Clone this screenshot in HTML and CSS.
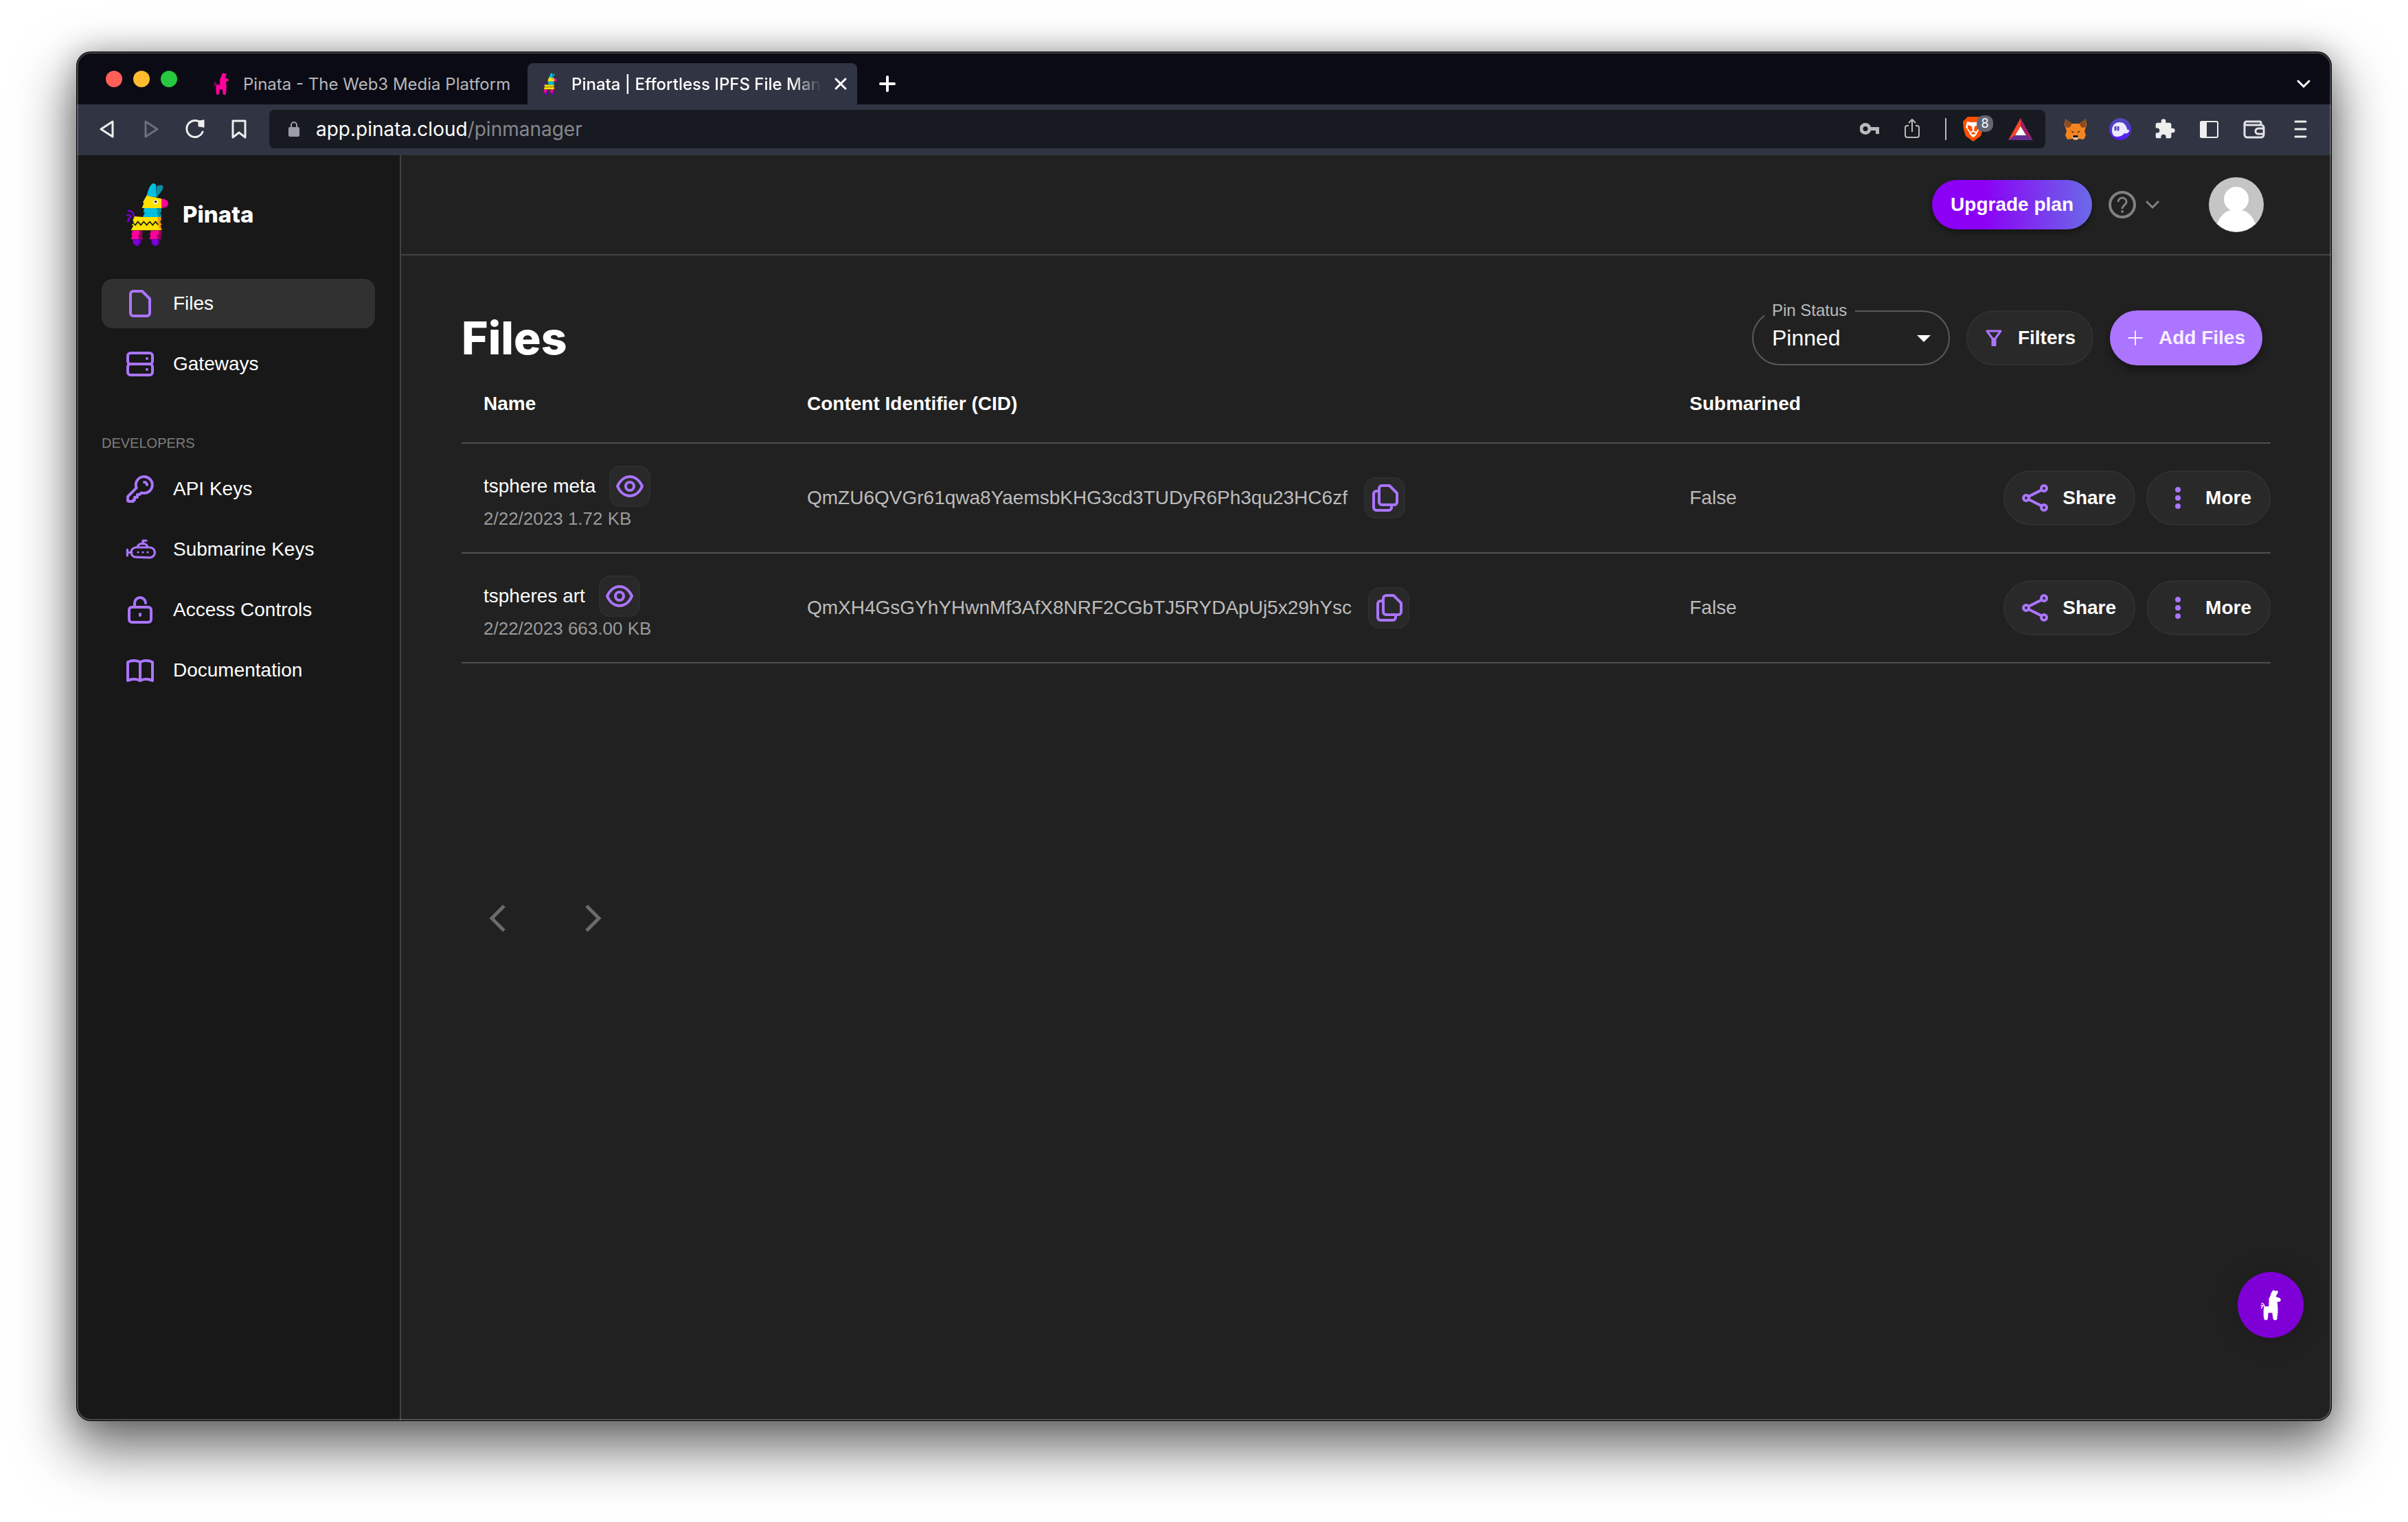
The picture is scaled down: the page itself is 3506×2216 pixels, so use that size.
FILE: index.html
```html
<!DOCTYPE html>
<html lang="en">
<head>
<meta charset="utf-8">
<title>Pinata | Effortless IPFS File Management</title>
<link rel="stylesheet" href="styles.css">
</head>
<body>
<svg class="sprite" aria-hidden="true">
  <symbol id="llama" viewBox="40 45 189 276">
    <path d="M175 62c6-6 20-9 27-3 4 6-1 16-6 24l-20 26h-4z" fill="#078ea3"/>
    <path d="M131 103c6-22 12-40 21-50 8-9 20-5 21 6v50z" fill="#00bfe0"/>
    <path d="M50 218c0-16 6-22 14-26M44 189c6-6 16-3 20 4M49 168c14-3 28 8 27 28" fill="none" stroke="#7d00d8" stroke-width="7"/>
    <path d="M131 101l65 14v38h8l-10 3h-83l9-23h-6z" fill="#ffe100"/>
    <path d="M196 115c16 0 30 10 30 22 0 9-10 17-30 17z" fill="#ff009c"/>
    <path d="M180 150l17 7c10 0 20-3 26-9-7 10-18 12-28 8z" fill="#8d0057"/>
    <circle cx="171" cy="129" r="9" fill="#fff"/><circle cx="171" cy="128" r="5" fill="#111"/>
    <path d="M121 156h60l9 18h-7l12 21h-80l9-20h-7z" fill="#00bfe0"/>
    <path d="M174 156h22v19l-6-2 8 21h-14l-8-20h6z" fill="#078ea3"/>
    <path d="M79 192l36 3h68l6 18-5 1 9 18-6 1 7 20H63l11-21-7-1 9-19-6-1z" fill="#ffe100"/>
    <path d="M178 195h17v18l-6-2 9 21-7-1 8 21h-9l-9-20 5-1-10-18 6-1z" fill="#ff9c00"/>
    <path d="M70 219l12 11 11-15 13 15 13-15 13 15 13-15 13 15 12-15 12 14" fill="none" stroke="#1b1b1b" stroke-width="5"/>
    <path d="M70 254h36l4 19h-4l8 19H62l7-18h-5zM151 254h36l5 19h-5l8 19h-52l7-18h-5z" fill="#ff009c"/>
    <path d="M99 254h14v19l-4-1 7 20H97l-3-20h7zM184 254h14v19l-4-1 2 20h-17l-3-20h8z" fill="#93005c"/>
    <path d="M72 292h36v10c0 10-8 18-18 18s-18-8-18-18zM153 292h36v10c0 10-8 18-18 18s-18-8-18-18z" fill="#7d00d8"/>
    <path d="M99 292h9v10c0 8-5 15-13 17 4-5 5-16 4-27zM180 292h9v10c0 8-5 15-13 17 4-5 5-16 4-27z" fill="#4f0089"/>
  </symbol>
  <symbol id="llama-solid" viewBox="40 45 189 276">
    <path d="M131 101c6-22 12-39 21-49 7-8 19-5 21 4 8-4 25-6 29 3 3 7-8 26-20 45l14 9c16 0 32 10 32 23s-14 20-30 18l-4 6 6 18-4 3 5 17-4 3 6 16-5 4 5 17-5 4 4 16-6 4 4 16-6 4 1 25c0 9-9 16-19 16s-20-7-20-18l-7-50h-36l-4 50c0 11-9 18-18 18s-17-7-17-17l-6-30 4-5-5-14 5-5-5-16 5-5-3-14 5-3-3-12 9-8 35 3 5-18-5-4 6-16-5-4 5-16-6-5z" fill="currentColor"/>
    <path d="M50 218c0-16 6-22 18-26M44 189c6-6 16-3 24 4M49 168c14-3 28 8 27 28" fill="none" stroke="currentColor" stroke-width="8"/>
  </symbol>
  <symbol id="eye" viewBox="0 0 24 24"><path d="M3 12c4-9.300 14-9.300 18 0c-4 9.300-14 9.300-18 0Z"/><circle cx="12" cy="12" r="3"/></symbol>
  <symbol id="copy" viewBox="0 0 24 24"><path d="M8 7H6a2 2 0 0 0-2 2v10a2 2 0 0 0 2 2h9a2 2 0 0 0 2-2v-2M8 5a2 2 0 0 1 2-2h5.500L21 8.500V15a2 2 0 0 1-2 2h-9a2 2 0 0 1-2-2z"/></symbol>
  <symbol id="share" viewBox="0 0 24 24"><circle cx="18.500" cy="5" r="2"/><circle cx="5.500" cy="12" r="2"/><circle cx="18.500" cy="19" r="2"/><path d="M16.800 6.200L7.200 11M7.200 13l9.600 4.800"/></symbol>
  <symbol id="dots" viewBox="0 0 24 24"><g fill="currentColor" stroke="none"><circle cx="12" cy="6" r="2"/><circle cx="12" cy="12" r="2"/><circle cx="12" cy="18" r="2"/></g></symbol>
</svg>

<div class="window">
  <div class="tabstrip">
    <div class="lights"><span class="light light-close"></span><span class="light light-min"></span><span class="light light-max"></span></div>
    <div class="tab">
      <svg class="favicon pink"><use href="#llama-solid"/></svg>
      <span class="tab-title">Pinata - The Web3 Media Platform</span>
    </div>
    <div class="tab tab-active">
      <svg class="favicon"><use href="#llama"/></svg>
      <span class="tab-title">Pinata | Effortless IPFS File Management</span>
      <button class="plain" aria-label="Close tab"><svg width="20" height="20" viewBox="0 0 20 20" stroke="#fff" stroke-width="3" stroke-linecap="round"><path d="M3 3l14 14M17 3L3 17"/></svg></button>
    </div>
    <button class="plain new-tab" aria-label="New tab"><svg width="28" height="28" viewBox="0 0 28 28" stroke="#fff" stroke-width="4" stroke-linecap="round"><path d="M14 4v20M4 14h20"/></svg></button>
    <button class="plain tab-list" aria-label="Search tabs"><svg width="24" height="24" viewBox="0 0 24 24" fill="none" stroke="#fff" stroke-width="3" stroke-linecap="round"><path d="M4 8l8 8 8-8"/></svg></button>
  </div>

  <div class="toolbar">
    <div class="nav-buttons">
      <button class="plain" aria-label="Back"><svg width="32" height="32" viewBox="0 0 32 32" fill="none" stroke="#eee" stroke-width="3" stroke-linejoin="round"><path d="M24 5v22L7 16z"/></svg></button>
      <button class="plain" aria-label="Forward"><svg width="32" height="32" viewBox="0 0 32 32" fill="none" stroke="#6d707c" stroke-width="3" stroke-linejoin="round"><path d="M8 5v22l17-11z"/></svg></button>
      <button class="plain" aria-label="Reload"><svg width="32" height="32" viewBox="0 0 32 32" fill="none" stroke="#eee" stroke-width="3" stroke-linecap="round"><path d="M26 9A12 12 0 1 0 27 20"/><path d="M22 5l6-1v8l-6-1z" fill="#eee"/></svg></button>
      <button class="plain" aria-label="Bookmark"><svg width="32" height="32" viewBox="0 0 32 32" fill="none" stroke="#eee" stroke-width="3" stroke-linejoin="round"><path d="M7 4h18v24l-9-7-9 7z"/></svg></button>
    </div>
    <div class="address">
      <svg width="16" height="24" viewBox="0 0 16 24" fill="#9a9ca8"><rect y="9" width="16" height="14" rx="2"/><path d="M4 10V6a4 4 0 0 1 8 0v4" fill="none" stroke="#9a9ca8" stroke-width="2"/></svg>
      <span class="url"><span class="host">app.pinata.cloud</span>/pinmanager</span>
      <div class="address-icons">
        <svg width="28" height="32" viewBox="0 0 28 32" fill="#b9babd"><path fill-rule="evenodd" d="M8 7a8 8 0 1 1 0 17A8 8 0 0 1 8 7zm0 5a3 3 0 1 0 0 7 3 3 0 0 0 0-7z"/><path d="M14 13h14v10h-5v-5h-9z"/></svg>
        <svg width="24" height="32" viewBox="0 0 24 32" fill="none" stroke="#b9babd" stroke-width="2"><path d="M7 11H5a3 3 0 0 0-3 3v11a3 3 0 0 0 3 3h14a3 3 0 0 0 3-3V14a3 3 0 0 0-3-3h-2M12 20V2M7 7l5-5 5 5"/></svg>
        <span class="divider"></span>
        <span class="brave">
          <svg width="30" height="36" viewBox="0 0 30 36"><path d="M7 0h16l7 6-1 12-3 10-11 8-11-8L1 18 0 7z" fill="#ff5000"/><path d="M6 7l6 1h6l6-1 2 8-4 6-3 6-4 3-4-3-3-6-4-6z" fill="#fff"/><path d="M7 12l6 2 1 6-3 2-4-5zM23 12l-6 2-1 6 3 2 4-5zM11 24l4-2 4 2-4 2z" fill="#ff5000"/></svg>
          <span class="badge">8</span>
        </span>
        <svg width="36" height="32" viewBox="0 0 36 32"><path d="M18 0v13l-9 13-9 6z" fill="#ff4724"/><path d="M18 0v13l9 13 9 6z" fill="#9e1f63"/><path d="M0 32l9-7h18l9 7z" fill="#662d91"/><path d="M18 12l8 13H10z" fill="#fff"/></svg>
      </div>
    </div>
    <div class="extensions">
      <svg width="32" height="32" viewBox="0 0 32 32"><path d="M1 1l10 7h10L31 1l1 9-3 9 2 6-3 6-8-1-2 2h-4l-2-2-8 1-3-6 2-6-3-9z" fill="#f5841f"/><path d="M1 1l10 7-4 6-6-1zM31 1L21 8l4 6 6-1z" fill="#8e4a1f"/><path d="M9 18l5 2-2 2zM23 18l-5 2 2 2z" fill="#5a3a28"/><path d="M11 27l5-1 5 1-2 4h-6z" fill="#d5bfb2"/><path d="M13 25h6l1 3h-8z" fill="#161616"/></svg>
      <svg width="32" height="32" viewBox="0 0 32 32"><defs><linearGradient id="ghost" x2="0" y2="1"><stop stop-color="#534bb1"/><stop offset="1" stop-color="#551bf9"/></linearGradient></defs><circle cx="16" cy="16" r="16" fill="url(#ghost)"/><path d="M4 18C4 10 9 6 15 6c7 0 10 5 11 10 1 2 3 0 3 2 0 3-3 5-7 4-3 4-7 5-11 5-4 0-7-3-7-9z" fill="#eceafd"/><path d="M9 13v4M13 13v4" stroke="#5a3fd0" stroke-width="3" stroke-linecap="round"/></svg>
      <svg width="32" height="32" viewBox="0 0 24 24" fill="#eee"><path d="M20.500 11H19V7a2 2 0 0 0-2-2h-4V3.500a2.500 2.500 0 0 0-5 0V5H4a2 2 0 0 0-2 2v3.800h1.500a2.700 2.700 0 0 1 0 5.400H2V20a2 2 0 0 0 2 2h3.800v-1.500a2.700 2.700 0 0 1 5.400 0V22H17a2 2 0 0 0 2-2v-4h1.500a2.500 2.500 0 0 0 0-5z"/></svg>
      <svg width="32" height="32" viewBox="0 0 32 32"><rect x="3" y="5" width="25" height="23" rx="2" fill="none" stroke="#eee" stroke-width="2"/><path d="M2 5h10v23H2z" fill="#eee"/></svg>
      <svg width="32" height="32" viewBox="0 0 32 32" fill="none" stroke="#e2e3e6" stroke-width="3"><path d="M26 10V7a2 2 0 0 0-2-2H5a3 3 0 0 0-3 3v16a4 4 0 0 0 4 4h20a4 4 0 0 0 4-4V14a4 4 0 0 0-4-4H5a3 3 0 0 1-3-3M30 15h-8a4 4 0 0 0 0 8h8"/></svg>
      <svg width="32" height="32" viewBox="0 0 32 32" stroke="#eee" stroke-width="3" stroke-linecap="round"><path d="M11 5h15M11 16h15M11 27h15"/></svg>
    </div>
  </div>

  <div class="app">
    <aside class="sidebar">
      <a class="brand" href="#"><svg class="brand-logo"><use href="#llama"/></svg><span>Pinata</span></a>
      <nav class="menu">
        <a class="menu-item menu-current" href="#"><svg class="icon" viewBox="0 0 24 24"><path d="M5 5a2 2 0 0 1 2-2h6.500L19 8.500V19a2 2 0 0 1-2 2H7a2 2 0 0 1-2-2z"/></svg>Files</a>
        <a class="menu-item" href="#"><svg class="icon" viewBox="0 0 24 24"><rect x="3" y="4" width="18" height="8" rx="2"/><rect x="3" y="12" width="18" height="8" rx="2"/><path d="M17 8h.01M17 16h.01"/></svg>Gateways</a>
      </nav>
      <h2 class="menu-heading">DEVELOPERS</h2>
      <nav class="menu">
        <a class="menu-item" href="#"><svg class="icon" viewBox="0 0 24 24"><path d="M9.300 11.200A6 6 0 1 1 13 14.700L11.500 16H10v2H8v2H7v1H4a1 1 0 0 1-1-1v-2.500z"/><path d="M15 7a2 2 0 0 1 2 2"/></svg>API Keys</a>
        <a class="menu-item" href="#"><svg class="icon icon-thin" viewBox="0 0 24 24"><path d="M9 10.500h10a3.700 3.700 0 0 1 0 7.400L9 17.600a3.500 3.500 0 0 1 0-7.100zM10 10.500a3.500 2.600 0 0 1 7.500 0M14 8V5.600h2.500M2.700 12v4.500M3 14.200h3"/><path d="M10.500 14h.01M14 14h.01M17.500 14h.01"/></svg>Submarine Keys</a>
        <a class="menu-item" href="#"><svg class="icon" viewBox="0 0 24 24"><rect x="4" y="10" width="16" height="11" rx="2"/><path d="M8 10V7a4 4 0 0 1 8 0M12 15v1"/></svg>Access Controls</a>
        <a class="menu-item" href="#"><svg class="icon" viewBox="0 0 24 24"><path d="M12 6c-2.500-1.400-6-1.400-9 0v13.500c3-1.400 6.500-1.400 9 0 2.500-1.400 6-1.400 9 0V6c-3-1.400-6.500-1.400-9 0zM12 6v13"/></svg>Documentation</a>
      </nav>
    </aside>

    <div class="content">
      <header class="header">
        <button class="upgrade">Upgrade plan</button>
        <button class="plain help" aria-label="Help">
          <svg width="40" height="40" viewBox="0 0 40 40" fill="none" stroke="#808080" stroke-width="4"><circle cx="20" cy="20" r="18"/><path d="M14 16c0-8 12-8 12 0 0 4-6 5-6 10M20 28v4" stroke-width="3"/></svg>
          <svg width="20" height="16" viewBox="0 0 20 16" fill="none" stroke="#808080" stroke-width="3"><path d="M1 3l9 9 9-9"/></svg>
        </button>
        <svg class="avatar" viewBox="0 0 80 80"><circle cx="40" cy="40" r="40" fill="#c5c5c5"/><circle cx="40" cy="32" r="18" fill="#fff"/><path d="M12 68c4-11 12-20 22-20h12c10 0 18 9 22 20a40 40 0 0 1-56 0z" fill="#fff"/></svg>
      </header>

      <main class="main">
        <div class="title-row">
          <h1>Files</h1>
          <div class="controls">
            <div class="field">
              <label for="pin-status">Pin Status</label>
              <select id="pin-status"><option>Pinned</option><option>Unpinned</option><option>All</option></select>
              <svg class="caret" width="20" height="10" viewBox="0 0 20 10" fill="#fff"><path d="M0 0h20L10 10z"/></svg>
            </div>
            <button class="pill"><svg class="icon icon-small" viewBox="0 0 24 24"><path d="M2 2h20l-8 11v10h-4V13z"/><path d="M12 13v9"/></svg>Filters</button>
            <button class="pill pill-primary"><svg class="icon icon-small" viewBox="0 0 24 24"><path d="M12 2v20M2 12h20"/></svg>Add Files</button>
          </div>
        </div>

        <div class="table-area">
          <table class="files">
            <thead>
              <tr><th class="col-name">Name</th><th class="col-cid">Content Identifier (CID)</th><th>Submarined</th><th></th></tr>
            </thead>
            <tbody>
              <tr>
                <td><div class="name-line"><span class="name">tsphere meta</span><button class="square" aria-label="View"><svg class="icon"><use href="#eye"/></svg></button></div><div class="meta">2/22/2023 1.72 KB</div></td>
                <td><div class="cid-line">QmZU6QVGr61qwa8YaemsbKHG3cd3TUDyR6Ph3qu23HC6zf<button class="square" aria-label="Copy"><svg class="icon"><use href="#copy"/></svg></button></div></td>
                <td>False</td>
                <td class="actions-cell"><div class="actions"><button class="pill"><svg class="icon"><use href="#share"/></svg>Share</button><button class="pill"><svg class="icon"><use href="#dots"/></svg>More</button></div></td>
              </tr>
              <tr>
                <td><div class="name-line"><span class="name">tspheres art</span><button class="square" aria-label="View"><svg class="icon"><use href="#eye"/></svg></button></div><div class="meta">2/22/2023 663.00 KB</div></td>
                <td><div class="cid-line">QmXH4GsGYhYHwnMf3AfX8NRF2CGbTJ5RYDApUj5x29hYsc<button class="square" aria-label="Copy"><svg class="icon"><use href="#copy"/></svg></button></div></td>
                <td>False</td>
                <td class="actions-cell"><div class="actions"><button class="pill"><svg class="icon"><use href="#share"/></svg>Share</button><button class="pill"><svg class="icon"><use href="#dots"/></svg>More</button></div></td>
              </tr>
            </tbody>
          </table>
        </div>

        <div class="pager">
          <button class="plain" aria-label="Previous page"><svg width="48" height="48" viewBox="0 0 48 48" fill="none" stroke="#6b6b6b" stroke-width="5"><path d="M34 6L16 24l18 18"/></svg></button>
          <button class="plain" aria-label="Next page"><svg width="48" height="48" viewBox="0 0 48 48" fill="none" stroke="#6b6b6b" stroke-width="5"><path d="M14 6l18 18-18 18"/></svg></button>
        </div>
      </main>
      <button class="chat" aria-label="Open chat"><svg width="30" height="46"><use href="#llama-solid"/></svg></button>
    </div>
  </div>
</div>
</body>
</html>
```
FILE: styles.css
```css
* { box-sizing: border-box; }

body {
  margin: 0;
  min-height: 100vh;
  padding: 76px 112px 148px;
  display: flex;
  background: #fff;
  font-family: "Liberation Sans", Arial, sans-serif;
  font-size: 28px;
  color: #fff;
}

svg { display: block; flex: none; }
.sprite { position: absolute; width: 0; height: 0; }
button { font: inherit; color: #fff; cursor: pointer; }
.plain { display: flex; align-items: center; justify-content: center; padding: 0; border: 0; background: none; }

.icon {
  width: 48px;
  height: 48px;
  color: #ab75ff;
  fill: none;
  stroke: currentColor;
  stroke-width: 2;
  stroke-linecap: round;
  stroke-linejoin: round;
}
.icon-thin { stroke-width: 1.6; }
.icon-small { width: 24px; height: 24px; stroke-width: 3; }

/* Browser window */
.window {
  position: relative;
  flex: 1;
  display: flex;
  flex-direction: column;
  min-width: 0;
  border-radius: 20px;
  overflow: hidden;
  background: #212121;
  box-shadow: 0 0 0 1px #000, 0 36px 80px 8px rgba(0, 0, 0, .55), 0 0 40px rgba(0, 0, 0, .25);
}
.window::after {
  content: "";
  position: absolute;
  inset: 0;
  border-radius: 20px;
  border: 2px solid rgba(255, 255, 255, .22);
  pointer-events: none;
}

.tabstrip {
  display: flex;
  align-items: flex-end;
  height: 76px;
  padding: 0 28px 0 42px;
  background: #0b0b15;
  font-family: Inter, sans-serif;
  font-size: 24px;
}
.lights { display: flex; gap: 16px; align-self: flex-start; padding-top: 27px; margin-right: 32px; }
.light { width: 24px; height: 24px; border-radius: 50%; }
.light-close { background: #ff5f57; }
.light-min { background: #febc2e; }
.light-max { background: #28c840; }

.tab {
  display: flex;
  align-items: center;
  width: 478px;
  height: 60px;
  padding-left: 20px;
  border-radius: 8px 8px 0 0;
  color: #b6b7ba;
}
.tab-active { width: 480px; padding-right: 14px; background: #313442; color: #fff; font-weight: 500; }
.favicon { width: 24px; height: 32px; margin-right: 20px; }
.pink { color: #ff009c; }
.tab-title { flex: 1; white-space: nowrap; }
.tab-active .tab-title { margin-right: 18px; overflow: hidden; mask-image: linear-gradient(90deg, #000 88%, transparent); }
.new-tab { width: 60px; height: 60px; margin-left: 14px; }
.tab-list { height: 60px; margin-left: auto; }

.toolbar {
  display: flex;
  align-items: center;
  height: 74px;
  padding: 0 31px 2px 28px;
  background: #313442;
}
.nav-buttons { display: flex; gap: 32px; margin-right: 28px; }
.address {
  flex: 1;
  display: flex;
  align-items: center;
  height: 56px;
  padding: 0 18px 0 28px;
  border-radius: 8px;
  background: #181a21;
}
.url { margin-left: 24px; font-family: Inter, sans-serif; color: #85878d; }
.host { color: #fff; }
.address-icons { display: flex; align-items: center; margin-left: auto; gap: 36px; }
.divider { width: 2px; height: 32px; background: #b9babd; }
.brave { position: relative; margin-left: -12px; }
.badge {
  position: absolute;
  left: 20px;
  top: -2px;
  width: 24px;
  height: 24px;
  border-radius: 10px;
  background: #636573;
  font: 18px/24px Inter, sans-serif;
  text-align: center;
}
.extensions { display: flex; gap: 33px; margin-left: 28px; }

/* Application */
.app { flex: 1; display: flex; }
.sidebar {
  flex: none;
  width: 472px;
  padding: 38px 36px 0;
  border-right: 2px solid #424242;
  background: #181818;
}
.brand {
  display: flex;
  align-items: center;
  gap: 20px;
  padding-left: 35px;
  margin-bottom: 46px;
  font: 800 33px/96px Inter, sans-serif;
  color: #fff;
  text-decoration: none;
}
.brand-logo { width: 63px; height: 92px; }
.menu { display: flex; flex-direction: column; gap: 16px; }
.menu-item {
  display: flex;
  align-items: center;
  gap: 24px;
  height: 72px;
  padding-left: 32px;
  border-radius: 16px;
  color: #fff;
  text-decoration: none;
}
.menu-current { background: #313131; }
.menu-heading { margin: 64px 0 16px; font-size: 20px; line-height: 30px; font-weight: 400; color: #7d7d7d; }

.content { position: relative; flex: 1; min-width: 0; }
.header {
  display: flex;
  align-items: center;
  justify-content: flex-end;
  height: 146px;
  padding-right: 98px;
  border-bottom: 2px solid #424242;
}
.upgrade {
  height: 72px;
  padding: 0 27px;
  border: 0;
  border-radius: 36px;
  background: linear-gradient(90deg, #8c00f5 32%, #6a6ae8);
  box-shadow: 0 4px 8px rgba(0, 0, 0, .4);
  font-weight: 700;
}
.help { gap: 14px; margin: 0 72px 0 24px; }
.avatar { width: 80px; height: 80px; }

.main { padding: 80px 88px 48px; }
.title-row { display: flex; align-items: center; justify-content: space-between; padding-right: 12px; }
h1 { margin: 0; font: 800 66px/80px Inter, sans-serif; }
.controls { display: flex; gap: 24px; }

.field { position: relative; width: 288px; }
.field label {
  position: absolute;
  left: 18px;
  top: -14px;
  padding: 0 12px 0 11px;
  background: #212121;
  font-size: 24px;
  line-height: 28px;
  color: #bcbcbc;
}
.field select {
  appearance: none;
  width: 100%;
  height: 80px;
  padding: 0 27px;
  border: 2px solid #5a5a5a;
  border-radius: 40px;
  background: none;
  font: inherit;
  font-size: 32px;
  color: #fff;
}
.caret { position: absolute; right: 28px; top: 36px; pointer-events: none; }

.pill {
  display: flex;
  align-items: center;
  gap: 16px;
  height: 80px;
  padding: 0 26px 0 20px;
  border: 2px solid #303030;
  border-radius: 40px;
  background: #292929;
  font-weight: 700;
}
.controls .pill { gap: 23px; padding: 0 24px 0 26px; }
.controls .pill-primary {
  gap: 22px;
  padding: 0 23px;
  border-color: #ab75ff;
  background: #ab75ff;
  color: #f6f0ff;
  box-shadow: 0 6px 12px rgba(0, 0, 0, .4);
}
.pill-primary .icon { color: #f6f0ff; stroke-width: 2; }

.table-area { min-height: 765px; }
.files { width: 100%; border-collapse: collapse; }
.files th, .files td { padding: 0 32px; border-bottom: 2px solid #505050; text-align: left; }
.files th { height: 113px; font-weight: 700; }
.files td { height: 160px; color: #bcbcbc; }
.files .col-name { width: 471px; }
.files .col-cid { width: 1285px; }
.files .actions-cell { padding-right: 0; }
.name-line { display: flex; align-items: center; gap: 20px; }
.name { color: #fff; }
.meta { font-size: 26px; line-height: 34px; color: #9a9a9a; }
.cid-line { display: flex; align-items: center; gap: 24px; }
.square {
  display: flex;
  align-items: center;
  justify-content: center;
  width: 60px;
  height: 60px;
  padding: 0;
  border: 2px solid #2e2e2e;
  border-radius: 16px;
  background: #292929;
}
.actions { display: flex; justify-content: flex-end; gap: 16px; }

.pager { display: flex; gap: 60px; padding-left: 12px; }
.pager button { width: 80px; height: 80px; }

.chat {
  position: absolute;
  right: 40px;
  bottom: 120px;
  display: flex;
  align-items: center;
  justify-content: center;
  width: 96px;
  height: 96px;
  padding: 0;
  border: 0;
  border-radius: 50%;
  background: #7f00d7;
  color: #fff;
  box-shadow: 0 2px 40px rgba(0, 0, 0, .2);
}
```
